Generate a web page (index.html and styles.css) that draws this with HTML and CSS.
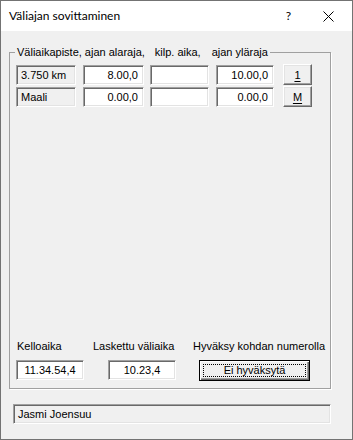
FILE: index.html
```html
<!DOCTYPE html>
<html lang="fi">

<head>
    <meta charset="UTF-8">
    <meta name="viewport" content="width=device-width, initial-scale=1.0">
    <title>Väliajan sovittaminen</title>
    <link rel="stylesheet" href="styles.css">
</head>

<body>
    <div class="window">
        <div class="titlebar">
            <span class="title">Väliajan sovittaminen</span>
            <span class="help">?</span>
            <svg class="close" width="11" height="11" viewBox="0 0 11 11">
                <path d="M0.5 0.5 L10.5 10.5 M10.5 0.5 L0.5 10.5" stroke="#000" stroke-width="1" fill="none" />
            </svg>
        </div>

        <div class="client">
            <fieldset class="group">
                <legend>Väliaikapiste, ajan alaraja,<span class="lg2">kilp. aika,</span><span class="lg3">ajan yläraja</span></legend>

                <div class="panel">
                    <div class="rows">
                        <div class="row">
                            <div class="box label sunken">3.750 km</div>
                            <div class="box edit w61 sunken">8.00,0</div>
                            <div class="box edit w59 sunken"></div>
                            <div class="box edit w58 sunken">10.00,0</div>
                            <div class="btn small"><u>1</u></div>
                        </div>
                        <div class="row">
                            <div class="box label sunken">Maali</div>
                            <div class="box edit w61 sunken">0.00,0</div>
                            <div class="box edit w59 sunken"></div>
                            <div class="box edit w58 sunken">0.00,0</div>
                            <div class="btn small"><u>M</u></div>
                        </div>
                    </div>

                    <div class="bottom">
                        <div class="col col1">
                            <span class="cap">Kelloaika</span>
                            <div class="box time sunken">11.34.54,4</div>
                        </div>
                        <div class="col col2">
                            <span class="cap">Laskettu väliaika</span>
                            <div class="box time sunken">10.23,4</div>
                        </div>
                        <div class="col col3">
                            <span class="cap">Hyväksy kohdan numerolla</span>
                            <div class="btn wide"><span class="focus">Ei hyväksytä</span></div>
                        </div>
                    </div>
                </div>
            </fieldset>

            <div class="status sunken">Jasmi Joensuu</div>
        </div>
    </div>
</body>

</html>
```

FILE: styles.css
```css
* {
    box-sizing: border-box;
    margin: 0;
    padding: 0;
    font-family: "Liberation Sans", Arial, sans-serif;
}

body {
    width: 353px;
    height: 440px;
    background: #f0f0f0;
}

.window {
    width: 353px;
    height: 440px;
    border: 1px solid #737373;
    background: #f0f0f0;
    display: flex;
    flex-direction: column;
    font-size: 11px;
    color: #000;
}

.titlebar {
    height: 30px;
    background: #fff;
    display: flex;
    align-items: center;
    padding-left: 8px;
}

.title {
    flex: 1;
    font-family: Lato, "Liberation Sans", sans-serif;
    font-size: 12px;
    line-height: 14px;
}

.help {
    font-family: Lato, "Liberation Sans", sans-serif;
    font-size: 12px;
    margin-right: 32px;
    line-height: 14px;
}

.close {
    margin-right: 18px;
}

.client {
    display: flex;
    flex-direction: column;
}

/* group box */
.group {
    margin: 14px 0 0 8px;
    width: 322px;
    height: 344px;
    border: 1px solid #a0a0a0;
    box-shadow: 1px 1px 0 #fff;
    padding: 6px 0 6px 6px;
}

.group legend {
    margin-left: -1px;
    padding: 0 2px;
    line-height: 14px;
    white-space: nowrap;
}

.lg2 {
    margin-left: 10px;
}

.lg3 {
    margin-left: 11px;
}

.panel {
    height: 316px;
    display: flex;
    flex-direction: column;
    justify-content: space-between;
}

.rows {
    display: flex;
    flex-direction: column;
    gap: 2px;
}

.row {
    display: flex;
    height: 20px;
}

.sunken {
    border: 1px solid;
    border-color: #a0a0a0 #fff #fff #a0a0a0;
    box-shadow: inset 1px 1px 0 #696969, inset -1px -1px 0 #e3e3e3;
}

.box {
    height: 20px;
    line-height: 18px;
    white-space: nowrap;
}

.label {
    width: 60px;
    padding-left: 4px;
}

.edit {
    background: #fff;
    text-align: right;
    padding-right: 5px;
    margin-left: 7px;
}

.w61 {
    width: 61px;
}

.w59 {
    width: 59px;
    margin-left: 6px;
}

.w58 {
    width: 58px;
}

.btn {
    background: #f0f0f0;
    border: 1px solid;
    border-color: #fff #696969 #696969 #fff;
    box-shadow: inset -1px -1px 0 #a0a0a0, inset 1px 1px 0 #e3e3e3;
    display: flex;
    align-items: center;
    justify-content: center;
}

.small {
    width: 29px;
    height: 21px;
    margin-left: 9px;
    margin-top: -1px;
}

.small u {
    text-decoration-thickness: 1px;
    text-underline-offset: 2px;
}

/* bottom part */
.bottom {
    display: flex;
}

.col {
    display: flex;
    flex-direction: column;
    align-items: flex-start;
    gap: 7px;
}

.cap {
    line-height: 14px;
    white-space: nowrap;
}

.col1 {
    width: 77px;
    padding-left: 1px;
}

.col1 .time {
    margin-left: -1px;
}

.col2 {
    width: 100px;
}

.col2 .time {
    margin-left: 15px;
}

.time {
    width: 68px;
    background: #fff;
    text-align: center;
}

.wide {
    width: 111px;
    height: 21px;
    margin-left: 6px;
    border: 1px solid #000;
    box-shadow: inset 1px 1px 0 #fff, inset -1px -1px 0 #696969, inset -2px -2px 0 #a0a0a0;
    padding: 3px;
}

.focus {
    flex: 1;
    align-self: stretch;
    border: 1px dotted #000;
    text-align: center;
    line-height: 11px;
}

.status {
    margin: 15px 0 0 12px;
    width: 318px;
    height: 20px;
    line-height: 18px;
    padding-left: 4px;
}
```
